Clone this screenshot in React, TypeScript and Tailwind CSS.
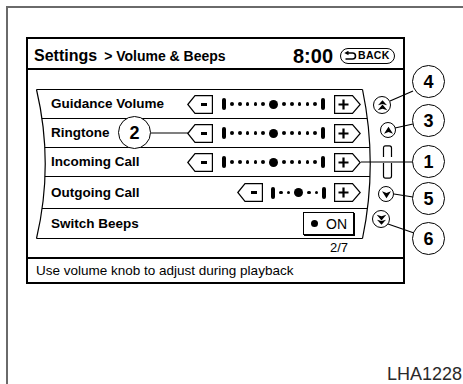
function MinusButton() {
  return (
    <div className="relative w-[26px] h-[19px] flex items-center justify-center pl-[8px]">
      <svg className="absolute inset-0" width="26" height="19" viewBox="0 0 26 19">
        <path d="M0.8 9.5 L8 0.6 H25.4 V18.4 H8 Z" fill="white" stroke="black" strokeWidth="1.2" />
      </svg>
      <span className="relative block w-[6px] h-[3px] bg-black" />
    </div>
  );
}

function PlusButton() {
  return (
    <div className="relative w-[27px] h-[19px] flex items-center justify-center pr-[8px]">
      <svg className="absolute inset-0" width="27" height="19" viewBox="0 0 27 19">
        <path d="M0.6 0.6 H18.5 L26.2 9.5 L18.5 18.4 H0.6 Z" fill="white" stroke="black" strokeWidth="1.2" />
      </svg>
      <svg className="relative" width="11" height="11" viewBox="0 0 11 11">
        <path d="M5.5 0.5 V10.5 M0.5 5.5 H10.5" stroke="black" strokeWidth="2.2" />
      </svg>
    </div>
  );
}

function Track({ dots, className }: { dots: number; className: string }) {
  const side = Array.from({ length: dots });
  return (
    <div className={`flex items-center justify-between h-[12px] ${className}`}>
      <span className="w-[4px] h-[12px] bg-black rounded-[2px]" />
      {side.map((_, i) => (
        <span key={`l${i}`} className="w-[3.5px] h-[3.5px] rounded-full bg-black" />
      ))}
      <span className="w-[9px] h-[9px] rounded-full bg-black" />
      {side.map((_, i) => (
        <span key={`r${i}`} className="w-[3.5px] h-[3.5px] rounded-full bg-black" />
      ))}
      <span className="w-[4px] h-[12px] bg-black rounded-[2px]" />
    </div>
  );
}

function VolumeControl({ small }: { small?: boolean }) {
  return (
    <div className={`flex items-center ${small ? 'gap-[8px]' : 'gap-[9px]'}`}>
      <MinusButton />
      <Track dots={small ? 2 : 5} className={small ? 'w-[55px]' : 'w-[103px]'} />
      <PlusButton />
    </div>
  );
}

function Row({ label, height, children }: { label: string; height: string; children: React.ReactNode }) {
  return (
    <div className={`flex items-center justify-between border-b border-black pl-[15px] pr-[15px] ${height}`}>
      <span className="text-[13.5px] font-bold leading-none">{label}</span>
      {children}
    </div>
  );
}

function Arrow({ double, down }: { double?: boolean; down?: boolean }) {
  return (
    <svg width="11" height="11" viewBox="0 0 11 11" className={down ? 'rotate-180' : ''}>
      {double ? (
        <path d="M5.5 0.3 L10 5.3 L5.5 4 L1 5.3 Z M5.5 4.6 L10.3 10.3 L5.5 8.7 L0.7 10.3 Z" fill="black" />
      ) : (
        <path d="M5.5 1.8 L10 8.8 L5.5 7 L1 8.8 Z" fill="black" />
      )}
    </svg>
  );
}

function Callout({ n, className }: { n: string; className: string }) {
  return (
    <div
      className={`absolute w-[33px] h-[33px] rounded-full border-[1.5px] border-black bg-white flex items-center justify-center text-[18px] font-bold leading-none ${className}`}
    >
      {n}
    </div>
  );
}

export default function App() {
  return (
    <div className="relative w-[463px] h-[384px] overflow-hidden bg-white pt-[6px] pl-[6px] text-black [font-family:'Liberation_Sans',Arial,sans-serif]">
      <div className="h-full flex flex-col border-l-2 border-t-2 border-[#6a6a6a]">
        {/* screen */}
        <div className="ml-[18px] mt-[29px] w-[379px] h-[247px] border-2 border-black flex flex-col">
          <div className="h-[31px] pt-[4px] border-b-2 border-black flex items-center justify-between pl-[6px] pr-[8px]">
            <div className="flex items-baseline">
              <span className="text-[16px] font-bold">Settings</span>
              <span className="ml-[7px] text-[14px] font-bold">&gt; Volume &amp; Beeps</span>
            </div>
            <div className="flex items-center gap-[7px]">
              <span className="text-[20px] font-bold leading-none">8:00</span>
              <div className="w-[55px] h-[16px] rounded-full border-[1.5px] border-black flex items-center pl-[3px] gap-[1px]">
                <svg width="13" height="10" viewBox="0 0 13 10">
                  <path d="M4 2 H8.5 A3 3 0 0 1 8.5 8 H1.5" fill="none" stroke="black" strokeWidth="1.6" />
                  <path d="M0.3 2 L4.5 -0.3 L4.5 4.3 Z" fill="black" />
                </svg>
                <span className="text-[10.5px] font-bold leading-none tracking-[0.3px]">BACK</span>
              </div>
            </div>
          </div>

          <div className="h-[187px] pt-[19px] pl-[8px] flex flex-col">
            <div className="relative w-[340px] h-[150px] border-t border-black">
              <Row label="Guidance Volume" height="h-[29px]">
                <VolumeControl />
              </Row>
              <Row label="Ringtone" height="h-[29px]">
                <VolumeControl />
              </Row>
              <Row label="Incoming Call" height="h-[29px]">
                <VolumeControl />
              </Row>
              <Row label="Outgoing Call" height="h-[32px]">
                <VolumeControl small />
              </Row>
              <Row label="Switch Beeps" height="h-[30px]">
                <div className="mr-[7px] w-[51px] h-[23px] border border-black shadow-[1px_1px_0_#000] flex items-center pl-[7px] gap-[8px]">
                  <span className="w-[7px] h-[7px] rounded-full bg-black" />
                  <span className="text-[14px] leading-none">ON</span>
                </div>
              </Row>
              <svg className="absolute left-0 top-[-1px] overflow-visible" width="340" height="150" viewBox="0 0 340 150">
                <path d="M-3 -2 L0.5 -2 L0.5 0.5 Q18 75 0.5 149.5 L0.5 152 L-3 152 Z" fill="white" />
                <path d="M326.5 -2 L326.5 0.5 Q342 75 326.5 149.5 L326.5 152 L346 152 L346 -2 Z" fill="white" />
                <path d="M0.5 0.5 Q18 75 0.5 149.5" fill="none" stroke="black" strokeWidth="1.2" />
                <path d="M326.5 0.5 Q342 75 326.5 149.5" fill="none" stroke="black" strokeWidth="1.2" />
              </svg>
            </div>
            <div className="mt-[2px] flex justify-end pr-[55px]">
              <span className="text-[13px] leading-[14px]">2/7</span>
            </div>
          </div>

          <div className="h-[25px] border-t-2 border-black flex items-center pl-[8px]">
            <span className="text-[13.5px] leading-none">Use volume knob to adjust during playback</span>
          </div>
        </div>

        <span className="mt-auto mb-[1px] mr-[1px] self-end text-[18px] leading-[18px] text-[#2a2a2a]">LHA1228</span>
      </div>

      {/* scroll controls on the arc */}
      <div className="absolute left-[373px] top-[96px] w-[18px] h-[18px] rounded-full border-[1.3px] border-black bg-white flex items-center justify-center">
        <Arrow double />
      </div>
      <div className="absolute left-[380px] top-[122px] w-[16px] h-[16px] rounded-full border-[1.3px] border-black bg-white flex items-center justify-center">
        <Arrow />
      </div>
      <svg className="absolute left-[382px] top-[145px]" width="11" height="34" viewBox="0 0 11 34">
        <path d="M1.5 12 V3 Q1.5 0.8 3.5 0.8 H7.5 Q9.5 0.8 9.5 3 V12" fill="none" stroke="black" strokeWidth="1.2" />
        <path d="M1.5 18 V31 Q1.5 33.2 3.5 33.2 H7.5 Q9.5 33.2 9.5 31 V18" fill="none" stroke="black" strokeWidth="1.2" />
      </svg>
      <div className="absolute left-[378px] top-[186px] w-[16px] h-[16px] rounded-full border-[1.3px] border-black bg-white flex items-center justify-center">
        <Arrow down />
      </div>
      <div className="absolute left-[372px] top-[210px] w-[18px] h-[18px] rounded-full border-[1.3px] border-black bg-white flex items-center justify-center">
        <Arrow double down />
      </div>

      {/* callout leaders */}
      <svg className="absolute left-0 top-0 pointer-events-none" width="463" height="384" viewBox="0 0 463 384">
        <g stroke="black" strokeWidth="1.2">
          <line x1="390" y1="101" x2="413" y2="91" />
          <line x1="395" y1="128" x2="413" y2="124" />
          <line x1="361" y1="162" x2="413" y2="162" />
          <line x1="394" y1="194" x2="413" y2="197" />
          <line x1="388" y1="224" x2="414" y2="233" />
          <line x1="151" y1="133" x2="188" y2="133" />
        </g>
      </svg>
      <Callout n="4" className="left-[412px] top-[65px]" />
      <Callout n="3" className="left-[412px] top-[104px]" />
      <Callout n="1" className="left-[412px] top-[145px]" />
      <Callout n="5" className="left-[412px] top-[182px]" />
      <Callout n="6" className="left-[412px] top-[222px]" />
      <Callout n="2" className="left-[118px] top-[116px]" />
    </div>
  );
}
